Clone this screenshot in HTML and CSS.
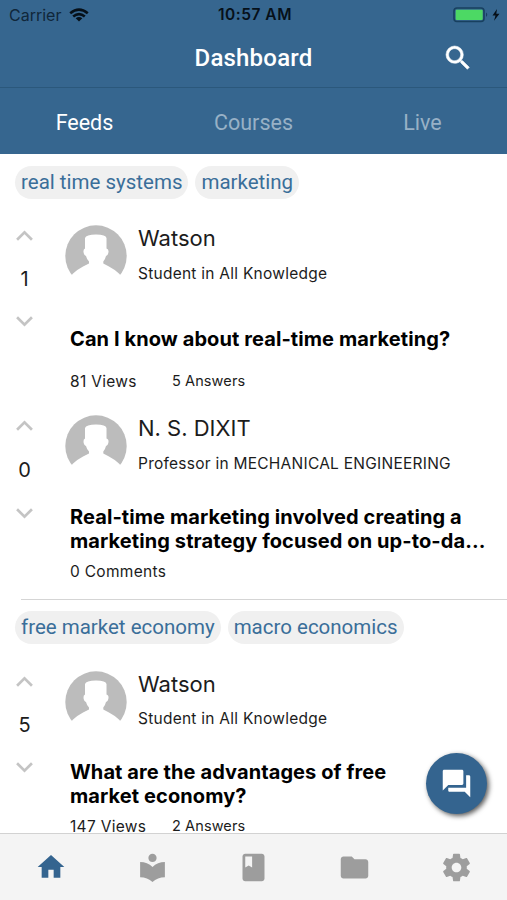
FILE: index.html
```html
<!DOCTYPE html>
<html lang="en">
  <head>
    <title>Dashboard</title>
    <meta charset="UTF-8" />
    <meta name="viewport" content="width=device-width, initial-scale=1.0" />
    <link rel="stylesheet" href="styles.css">
  </head>
  <body>
    <!-- shared shapes -->
    <svg width="0" height="0" class="defs">
      <symbol id="avatar" viewBox="0 0 62 62">
        <circle cx="31" cy="31" r="30.7" fill="#bcbcbc" />
        <path fill="#fff" d="M20 13Q21 9.500 31 9.500T41.500 13V23.500Q43.800 24 43.500 27Q43 30.500 41 31Q40 35 38.300 36.500V38.500L43.500 41.200Q50 44.500 54.500 49L62 62H0L7.500 49Q12 44.500 18.500 41.200L24 38.500V36.500Q22 35 21 31Q19 30.500 18.500 27Q18.200 24 20 23.500Z" />
      </symbol>
      <symbol id="up" viewBox="0 0 16 10">
        <path d="M1 9l7-7 7 7" fill="none" stroke="#c4c4c4" stroke-width="2.500" />
      </symbol>
      <symbol id="down" viewBox="0 0 16 10">
        <path d="M1 1l7 7 7-7" fill="none" stroke="#c4c4c4" stroke-width="2.500" />
      </symbol>
    </svg>

    <header>
      <div class="status">
        <div class="carrier">
          <span>Carrier</span>
          <svg width="20" height="14" viewBox="0 0 20 14" fill="none" stroke="#061019" stroke-width="2.600">
            <path d="M1.200 5.200Q10-2 18.800 5.200M4.200 8.600Q10 3.600 15.800 8.600" />
            <path d="M10 13.500L6.700 10.300Q10 7.600 13.300 10.300Z" fill="#061019" stroke="none" />
          </svg>
        </div>
        <span class="time">10:57 AM</span>
        <svg class="battery" width="48" height="16" viewBox="0 0 48 16">
          <rect x="1" y="1" width="30" height="13.500" rx="3" fill="none" stroke="#18405f" stroke-width="1.600" />
          <rect x="2.700" y="2.700" width="27" height="10.300" rx="1" fill="#4cd964" />
          <path d="M33 5.500Q35.500 7.700 33 10Z" fill="#18405f" />
          <path d="M44 2L39.500 8.600H42.500L41 13.800L46.500 6.800H43.300Z" fill="#061019" />
        </svg>
      </div>
      <div class="title-bar">
        <h1>Dashboard</h1>
        <svg class="search" width="32" height="32" viewBox="0 0 24 24" fill="#fff" stroke="#fff" stroke-width="0.400">
          <path d="M15.500 14h-.79l-.28-.27A6.471 6.471 0 0 0 16 9.500 6.500 6.500 0 1 0 9.500 16c1.610 0 3.090-.59 4.230-1.570l.27.28v.79l5 4.990L20.490 19l-4.990-5zm-6 0C7.010 14 5 11.990 5 9.500S7.010 5 9.500 5 14 7.010 14 9.500 11.990 14 9.500 14z" />
        </svg>
      </div>
      <nav class="tabs">
        <a class="active">Feeds</a>
        <a>Courses</a>
        <a>Live</a>
      </nav>
    </header>

    <main>
      <section class="feed">
        <div class="tags"><span class="tag">real time systems</span><span class="tag">marketing</span></div>

        <article class="post">
          <div class="votes">
            <svg><use href="#up" /></svg>
            <span>1</span>
            <svg><use href="#down" /></svg>
          </div>
          <div class="post-body">
            <div class="author">
              <svg class="avatar"><use href="#avatar" /></svg>
              <div>
                <div class="name">Watson</div>
                <div class="role">Student in All Knowledge</div>
              </div>
            </div>
            <h2>Can I know about real-time marketing?</h2>
            <div class="meta"><span>81 Views</span><span class="answers">5 Answers</span></div>
          </div>
        </article>

        <article class="post answer">
          <div class="votes">
            <svg><use href="#up" /></svg>
            <span>0</span>
            <svg><use href="#down" /></svg>
          </div>
          <div class="post-body">
            <div class="author">
              <svg class="avatar"><use href="#avatar" /></svg>
              <div>
                <div class="name">N. S. DIXIT</div>
                <div class="role">Professor in MECHANICAL ENGINEERING</div>
              </div>
            </div>
            <h2>Real-time marketing involved creating a<br>marketing strategy focused on up-to-da...</h2>
            <div class="meta"><span>0 Comments</span></div>
          </div>
        </article>
      </section>

      <section class="feed">
        <div class="tags"><span class="tag">free market economy</span><span class="tag">macro economics</span></div>

        <article class="post last">
          <div class="votes">
            <svg><use href="#up" /></svg>
            <span>5</span>
            <svg><use href="#down" /></svg>
          </div>
          <div class="post-body">
            <div class="author">
              <svg class="avatar"><use href="#avatar" /></svg>
              <div>
                <div class="name">Watson</div>
                <div class="role">Student in All Knowledge</div>
              </div>
            </div>
            <h2>What are the advantages of free<br>market economy?</h2>
            <div class="meta"><span>147 Views</span><span class="answers">2 Answers</span></div>
          </div>
        </article>
      </section>

      <a class="fab">
        <svg width="33" height="33" viewBox="0 0 24 24" fill="#fff">
          <path d="M21 6h-2v9H6v2c0 .55.45 1 1 1h11l4 4V7c0-.55-.45-1-1-1zm-4 6V3c0-.55-.45-1-1-1H3c-.55 0-1 .45-1 1v14l4-4h10c.55 0 1-.45 1-1z" />
        </svg>
      </a>
    </main>

    <nav class="bottom">
      <a class="active">
        <svg viewBox="0 0 24 24"><path d="M10 20v-6h4v6h5v-8h3L12 3 2 12h3v8z" /></svg>
      </a>
      <a>
        <svg viewBox="0 0 24 24"><path d="M12 11.550C9.640 9.350 6.480 8 3 8v11c3.480 0 6.640 1.350 9 3.550 2.360-2.190 5.520-3.550 9-3.550V8c-3.480 0-6.640 1.350-9 3.550zM12 8c1.660 0 3-1.340 3-3s-1.340-3-3-3-3 1.340-3 3 1.340 3 3 3z" /></svg>
      </a>
      <a>
        <svg viewBox="0 0 24 24"><path d="M18 2H6c-1.100 0-2 .9-2 2v16c0 1.100.9 2 2 2h12c1.100 0 2-.9 2-2V4c0-1.100-.9-2-2-2zM6 4h5v8l-2.500-1.500L6 12V4z" /></svg>
      </a>
      <a>
        <svg viewBox="0 0 24 24"><path d="M10 4H4c-1.100 0-1.990.9-1.990 2L2 18c0 1.100.9 2 2 2h16c1.100 0 2-.9 2-2V8c0-1.100-.9-2-2-2h-8l-2-2z" /></svg>
      </a>
      <a>
        <svg viewBox="0 0 24 24"><path d="M19.430 12.980c.04-.32.07-.64.07-.98s-.03-.66-.07-.98l2.110-1.650c.19-.15.24-.42.12-.64l-2-3.460c-.12-.22-.39-.3-.61-.22l-2.490 1c-.52-.4-1.080-.73-1.690-.98l-.38-2.650C14.460 2.180 14.250 2 14 2h-4c-.25 0-.46.18-.49.42l-.38 2.650c-.61.25-1.170.59-1.690.98l-2.490-1c-.23-.09-.49 0-.61.22l-2 3.460c-.13.22-.07.49.12.64l2.110 1.650c-.04.32-.07.65-.07.98s.03.66.07.98l-2.110 1.650c-.19.15-.24.42-.12.64l2 3.460c.12.22.39.3.61.22l2.490-1c.52.4 1.080.73 1.690.98l.38 2.650c.03.24.24.42.49.42h4c.25 0 .46-.18.49-.42l.38-2.650c.61-.25 1.170-.59 1.690-.98l2.490 1c.23.09.49 0 .61-.22l2-3.460c.12-.22.07-.49-.12-.64l-2.110-1.650zM12 15.500c-1.930 0-3.500-1.570-3.500-3.500s1.570-3.500 3.500-3.500 3.500 1.570 3.500 3.500-1.570 3.500-3.500 3.500z" /></svg>
      </a>
    </nav>
  </body>
</html>
```
FILE: styles.css
```css
* {
  box-sizing: border-box;
}
body {
  margin: 0;
  height: 900px;
  display: flex;
  flex-direction: column;
  overflow: hidden;
  background: #fff;
  color: #1c1c1c;
  font-family: Inter, "Liberation Sans", sans-serif;
}
svg {
  display: block;
  flex: none;
}
.defs {
  position: absolute;
}

/* header */
header {
  height: 154px;
  flex: none;
  background: #36668f;
}
.status {
  height: 29px;
  padding: 0 6px 0 9px;
  display: grid;
  grid-template-columns: 1fr auto 1fr;
  align-items: center;
  color: #061019;
  font-size: 16px;
}
.carrier {
  display: flex;
  align-items: center;
  gap: 8px;
  color: #10273a;
}
.time {
  font-weight: 600;
  font-size: 15.500px;
  letter-spacing: 0.5px;
}
.battery {
  justify-self: end;
}
.title-bar {
  height: 59px;
  padding-bottom: 1px;
  display: grid;
  grid-template-columns: 1fr auto 1fr;
  align-items: center;
  border-bottom: 1px solid #2b587c;
}
h1 {
  grid-column: 2;
  margin: 0;
  color: #fff;
  font: 500 24px Roboto, sans-serif;
  letter-spacing: 0.2px;
}
.search {
  justify-self: end;
  margin-right: 33px;
}
.tabs {
  height: 66px;
  padding-top: 2px;
  display: grid;
  grid-template-columns: repeat(3, 1fr);
  align-items: center;
  text-align: center;
  color: #98b1c6;
  font: 21.500px Roboto, sans-serif;
}
.tabs .active {
  color: #fff;
}

/* feed */
main {
  flex: 1;
  min-height: 0;
  overflow: hidden;
  position: relative;
}
.feed {
  height: 445px;
  padding-top: 12px;
}
.feed + .feed {
  margin-left: 21px;
  padding-top: 11px;
  border-top: 1px solid #d5d5d5;
}
.feed + .feed > * {
  margin-left: -21px;
}
.tags {
  display: flex;
  gap: 7px;
  padding-left: 15px;
}
.tag {
  height: 33px;
  padding: 0 6px;
  border-radius: 17px;
  background: #f0f0f0;
  color: #3a6e99;
  font: 20.500px/33px Roboto, sans-serif;
}
.post {
  height: 190px;
  display: flex;
}
.tags + .post {
  margin-top: 26px;
}
.tags + .last {
  margin-top: 27px;
}
.votes {
  width: 49px;
  height: 102px;
  padding-top: 5px;
  display: flex;
  flex-direction: column;
  align-items: center;
  justify-content: space-between;
  font-size: 20px;
}
.answer .votes {
  height: 104px;
}
.votes svg {
  width: 17px;
  height: 11px;
}
.post-body {
  padding-left: 16px;
}
.author {
  display: flex;
  height: 62px;
  gap: 11px;
}
.avatar {
  width: 62px;
  height: 62px;
}
.name {
  font-size: 22px;
  line-height: 26px;
}
.role {
  margin-top: 13px;
  font-size: 15.500px;
  line-height: 20px;
  letter-spacing: 0.250px;
}
.last .role {
  margin-top: 12px;
}
h2 {
  margin: 40px 0 0 5px;
  color: #000;
  font-size: 20px;
  line-height: 24px;
  font-weight: 700;
  letter-spacing: 0.090px;
  white-space: nowrap;
}
.answer h2 {
  margin-top: 28px;
}
.last h2 {
  margin-top: 27px;
}
.meta {
  display: flex;
  margin: 21px 0 0 5px;
  font-size: 15.500px;
  line-height: 20px;
  letter-spacing: 0.300px;
}
.meta span:first-child {
  min-width: 102px;
}
.answer .meta,
.last .meta {
  margin-top: 9px;
}
.answers {
  font-size: 14.500px;
  line-height: 18px;
  letter-spacing: 0.100px;
}

/* floating chat button */
.fab {
  position: absolute;
  right: 20px;
  bottom: 19px;
  width: 61px;
  height: 61px;
  display: flex;
  align-items: center;
  justify-content: center;
  border-radius: 50%;
  background: #34648f;
  box-shadow: 2px 2px 5px rgba(0, 0, 0, 0.65);
}

/* bottom navigation */
.bottom {
  height: 67px;
  flex: none;
  display: grid;
  grid-template-columns: repeat(5, 1fr);
  place-items: center;
  border-top: 1px solid #d2d2d2;
  background: #f4f4f4;
  fill: #9d9d9d;
}
.bottom svg {
  width: 33px;
  height: 33px;
}
.bottom .active {
  padding-left: 1px;
  fill: #34648f;
}
.bottom .active svg {
  width: 32px;
  height: 32px;
}
```
